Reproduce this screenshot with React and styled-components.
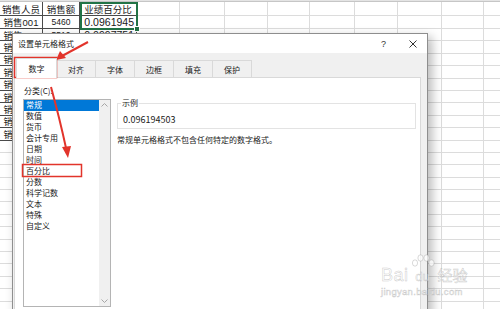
import React from "react";
import styled, { createGlobalStyle } from "styled-components";

const GlobalStyle = createGlobalStyle`
  html, body {
    margin: 0;
    padding: 0;
    background: #fff;
  }
  body {
    font-family: "Noto Sans CJK SC", "Liberation Sans", sans-serif;
  }
`;

const COLS = [43, 37, 57, 43, 45, 43, 42, 45, 43, 44, 42, 42];

const Page = styled.div`
  position: relative;
  width: 500px;
  height: 309px;
  overflow: hidden;
  background: #fff;
`;

/* ---------- spreadsheet behind the dialog ---------- */

const Sheet = styled.div`
  display: flex;
  flex-direction: column;
`;

const ColHeader = styled.div`
  height: 1px;
  background: #e4e4e4;
  border-bottom: 1px solid #c6c6c6;
`;

const Row = styled.div`
  display: grid;
  grid-template-columns: ${COLS.map((w) => `${w}px`).join(" ")};
  height: ${(p) => p.$h}px;
`;

const Cell = styled.div`
  box-sizing: border-box;
  display: flex;
  align-items: center;
  justify-content: ${(p) => p.$align || "center"};
  padding: 0 2px;
  overflow: hidden;
  white-space: nowrap;
  font-family: "Liberation Sans", "Noto Sans CJK SC", sans-serif;
  font-size: ${(p) => p.$size || 9.5}px;
  color: #1a1a1a;
  border-right: 1px solid ${(p) => (p.$data ? "#4a4a4a" : "#dcdcdc")};
  border-bottom: 1px solid ${(p) => (p.$data ? "#4a4a4a" : "#dcdcdc")};
`;

const Selection = styled.div`
  position: absolute;
  left: 80px;
  top: 2px;
  width: 58px;
  height: 28px;
  box-sizing: border-box;
  border: 2px solid #217346;

  &::after {
    content: "";
    position: absolute;
    right: -4px;
    bottom: -4px;
    width: 4px;
    height: 4px;
    background: #217346;
    border: 1px solid #fff;
  }
`;

/* ---------- dialog ---------- */

const Dialog = styled.div`
  position: absolute;
  left: 12px;
  top: 33px;
  width: 416px;
  height: 290px;
  box-sizing: border-box;
  display: flex;
  flex-direction: column;
  background: #f0f0f0;
  border: 1px solid #8e8e8e;
  box-shadow: 4px 4px 10px rgba(0, 0, 0, 0.28);
  font-size: 8px;
  color: #1a1a1a;
`;

const TitleBar = styled.div`
  height: 19px;
  display: flex;
  align-items: center;
  padding: 0 10px 0 5px;
  background: #fff;
`;

const Title = styled.span`
  font-size: 8px;
  color: #222;
`;

const TitleButtons = styled.div`
  margin-left: auto;
  display: flex;
  align-items: center;
  gap: 23px;
  color: #333;
`;

const Help = styled.span`
  font-family: "Liberation Sans", sans-serif;
  font-size: 9px;
`;

const Body = styled.div`
  flex: 1;
  display: flex;
  flex-direction: column;
  padding: 0 6px 0 1px;
`;

const TabStrip = styled.div`
  height: 24px;
  display: flex;
  align-items: flex-end;
  padding-left: 2px;
`;

const Tab = styled.div`
  box-sizing: border-box;
  width: ${(p) => (p.$active ? 41 : 39)}px;
  height: ${(p) => (p.$active ? 20 : 17)}px;
  margin-bottom: ${(p) => (p.$active ? -1 : 0)}px;
  display: flex;
  align-items: center;
  justify-content: center;
  background: ${(p) => (p.$active ? "#fff" : "#f0f0f0")};
  border-top: 1px solid #d9d9d9;
  border-right: 1px solid #d9d9d9;
  border-left: ${(p) => (p.$active ? "1px solid #d9d9d9" : "none")};
  position: relative;
  z-index: ${(p) => (p.$active ? 1 : 0)};
  font-size: 8px;
`;

const Panel = styled.div`
  flex: 1;
  display: grid;
  grid-template-columns: 88px 1fr;
  column-gap: 6px;
  align-items: start;
  padding: 7px 4px 0 8px;
  background: #fff;
  border: 1px solid #d9d9d9;
`;

const LeftCol = styled.div`
  display: flex;
  flex-direction: column;
`;

const FieldLabel = styled.div`
  line-height: 12px;
  padding-left: 1px;
`;

const ListBox = styled.div`
  margin-top: 2px;
  height: 208px;
  box-sizing: border-box;
  display: flex;
  border: 1px solid #b4b4b4;
`;

const Items = styled.div`
  flex: 1;
  display: flex;
  flex-direction: column;
`;

const Item = styled.div`
  height: 11px;
  line-height: 10px;
  padding-left: 2px;
  background: ${(p) => (p.$selected ? "#0078d7" : "transparent")};
  color: ${(p) => (p.$selected ? "#fff" : "#1a1a1a")};
`;

const ScrollBar = styled.div`
  width: 11px;
  display: flex;
  flex-direction: column;
  justify-content: space-between;
  align-items: center;
  padding: 3px 0;
  background: #f0f0f0;
`;

const RightCol = styled.div`
  display: flex;
  flex-direction: column;
`;

const SampleGroup = styled.fieldset`
  margin: 12px 0 0;
  padding: 5px 5px 2px;
  border: 1px solid #e3e3e3;
  min-width: 0;
`;

const SampleLegend = styled.legend`
  padding: 0 1px;
  margin-left: -2px;
  line-height: 12px;
`;

const SampleValue = styled.div`
  font-size: 9px;
  line-height: 12px;
`;

const Description = styled.div`
  margin-top: 5px;
  line-height: 12px;
`;

/* ---------- watermark ---------- */

const Watermark = styled.div`
  position: absolute;
  left: 381px;
  top: 254px;
  display: flex;
  flex-direction: column;
  align-items: flex-start;
  color: rgba(255, 255, 255, 0.7);
  -webkit-text-stroke: 0.5px rgba(150, 150, 150, 0.5);
`;

const MarkLine = styled.div`
  display: flex;
  align-items: flex-end;
`;

const BaiText = styled.span`
  font-family: "Liberation Sans", sans-serif;
  font-size: 18px;
  line-height: 18px;
  letter-spacing: 0.5px;
`;

const Paw = styled.span`
  position: relative;
  display: inline-flex;
  align-items: flex-end;
  justify-content: center;
  width: 28px;
  height: 30px;
  font-family: "Liberation Sans", sans-serif;
  font-size: 13px;
  line-height: 14px;
`;

const PawToes = styled.svg`
  position: absolute;
  left: 2px;
  top: 0;
`;

const JingYan = styled.span`
  font-size: 15px;
  line-height: 18px;
  margin-left: 1px;
`;

const MarkUrl = styled.div`
  font-family: "Liberation Sans", sans-serif;
  font-size: 9.5px;
  line-height: 11px;
  margin-top: 2px;
  letter-spacing: 0.3px;
`;

const Annotations = styled.svg`
  position: absolute;
  left: 0;
  top: 0;
  pointer-events: none;
`;

const header = ["销售人员", "销售额", "业绩百分比"];
const data = [
  ["销售001", "5460", "0.0961945"],
  ["销售002", "5510", "0.0997751"],
  ["销售003", "5820", "0.1022843"],
  ["销售004", "4970", "0.0873462"],
  ["销售005", "6210", "0.1091388"],
  ["销售006", "5340", "0.0938489"],
  ["销售007", "5760", "0.1012302"],
  ["销售008", "5190", "0.0912127"],
  ["销售009", "6030", "0.1059754"],
  ["销售010", "5620", "0.0987697"],
];

const categories = [
  "常规",
  "数值",
  "货币",
  "会计专用",
  "日期",
  "时间",
  "百分比",
  "分数",
  "科学记数",
  "文本",
  "特殊",
  "自定义",
];

const tabs = ["数字", "对齐", "字体", "边框", "填充", "保护"];

const Chevron = ({ up }) => (
  <svg width="7" height="4" viewBox="0 0 7 4">
    <path
      d={up ? "M0.5 3.5 L3.5 0.5 L6.5 3.5" : "M0.5 0.5 L3.5 3.5 L6.5 0.5"}
      fill="none"
      stroke="#a6a6a6"
      strokeWidth="1"
    />
  </svg>
);

const toeProps = {
  rx: 2.6,
  ry: 3.2,
  fill: "rgba(255,255,255,0.7)",
  stroke: "rgba(150,150,150,0.5)",
  strokeWidth: 0.7,
};

const SheetGrid = () => {
  const rows = [];
  rows.push({ h: 14, cells: header, data: true });
  data.forEach((r, i) => rows.push({ h: i === 0 ? 13 : 12.4, cells: r, data: true }));
  for (let i = 0; i < 16; i++) rows.push({ h: 12.4, cells: [], data: false });

  return (
    <Sheet>
      <ColHeader />
      {rows.map((row, ri) => (
        <Row key={ri} $h={row.h}>
          {COLS.map((_, ci) => {
            const isData = row.data && ci < 3;
            const align = ri > 0 && ci === 2 ? "flex-end" : "center";
            return (
              <Cell
                key={ci}
                $data={isData}
                $align={align}
                $size={ri > 0 && ci === 2 ? 10.5 : ci === 1 && ri > 0 ? 8.5 : 9.5}
              >
                {row.cells[ci] || ""}
              </Cell>
            );
          })}
        </Row>
      ))}
    </Sheet>
  );
};

const App = () => (
  <Page>
    <GlobalStyle />
    <SheetGrid />
    <Selection />

    <Dialog>
      <TitleBar>
        <Title>设置单元格格式</Title>
        <TitleButtons>
          <Help>?</Help>
          <svg width="8" height="8" viewBox="0 0 8 8">
            <path d="M0.5 0.5 L7.5 7.5 M7.5 0.5 L0.5 7.5" stroke="#333" strokeWidth="1" />
          </svg>
        </TitleButtons>
      </TitleBar>

      <Body>
        <TabStrip>
          {tabs.map((t, i) => (
            <Tab key={t} $active={i === 0}>
              {t}
            </Tab>
          ))}
        </TabStrip>

        <Panel>
          <LeftCol>
            <FieldLabel>分类(C):</FieldLabel>
            <ListBox>
              <Items>
                {categories.map((c, i) => (
                  <Item key={c} $selected={i === 0}>
                    {c}
                  </Item>
                ))}
              </Items>
              <ScrollBar>
                <Chevron up />
                <Chevron />
              </ScrollBar>
            </ListBox>
          </LeftCol>

          <RightCol>
            <SampleGroup>
              <SampleLegend>示例</SampleLegend>
              <SampleValue>0.096194503</SampleValue>
            </SampleGroup>
            <Description>常规单元格格式不包含任何特定的数字格式。</Description>
          </RightCol>
        </Panel>
      </Body>
    </Dialog>

    <Watermark>
      <MarkLine>
        <BaiText>Bai</BaiText>
        <Paw>
          <PawToes width="24" height="14" viewBox="0 0 24 14">
            <ellipse cx="4" cy="9" {...toeProps} />
            <ellipse cx="9.5" cy="4" {...toeProps} />
            <ellipse cx="15.5" cy="4" {...toeProps} />
            <ellipse cx="20.5" cy="9" {...toeProps} />
          </PawToes>
          du
        </Paw>
        <JingYan>经验</JingYan>
      </MarkLine>
      <MarkUrl>jingyan.baidu.com</MarkUrl>
    </Watermark>

    <Annotations width="500" height="309" viewBox="0 0 500 309">
      <rect x="14.5" y="57.5" width="42" height="20" fill="none" stroke="#e2342b" strokeWidth="1.5" />
      <rect x="22.5" y="164.5" width="59" height="12" fill="none" stroke="#e2342b" strokeWidth="1.5" />
      <line x1="88" y1="42" x2="62" y2="56" stroke="#e2342b" strokeWidth="2" />
      <polygon points="56,60 60,51 66,58" fill="#e2342b" />
      <path d="M51 87 Q60 120 66 148" fill="none" stroke="#e2342b" strokeWidth="2" />
      <polygon points="68,158 62,147 71,146" fill="#e2342b" />
    </Annotations>
  </Page>
);

export default App;
